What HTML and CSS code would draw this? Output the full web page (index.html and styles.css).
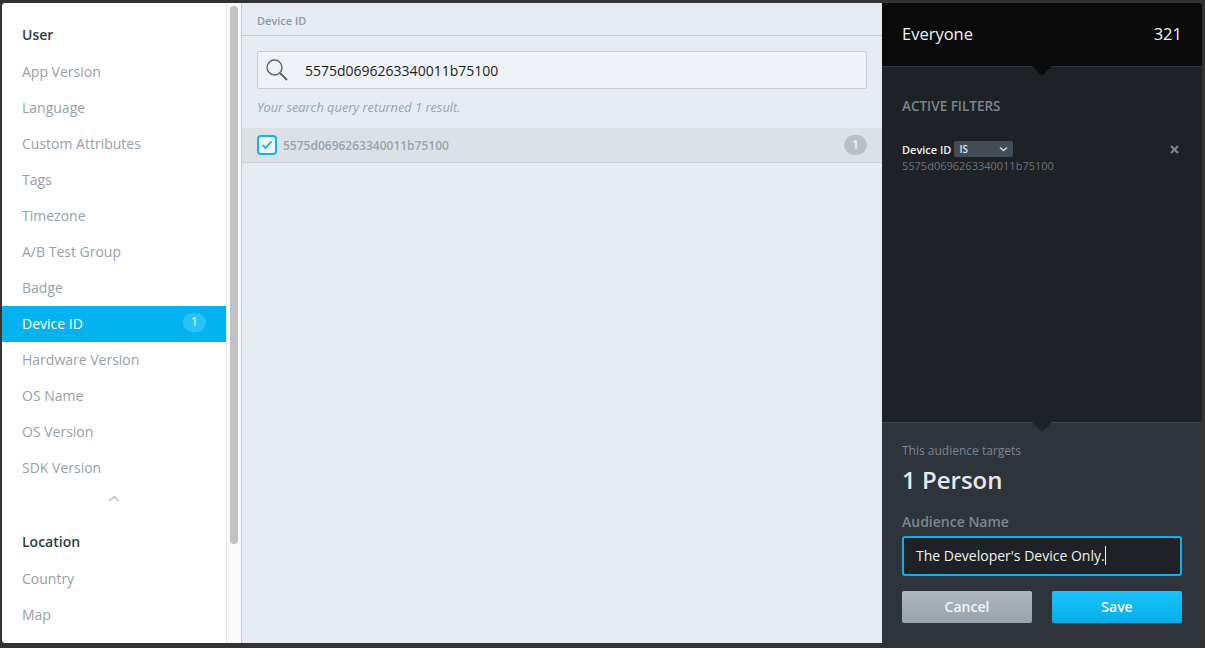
FILE: index.html
```html
<!DOCTYPE html>
<html lang="en">
<head>
<meta charset="utf-8">
<title>Audience</title>
<link rel="stylesheet" href="styles.css">
</head>
<body>
<div class="modal">
  <nav class="side">
    <div class="side-list">
      <div class="head">User</div>
      <div class="item">App Version</div>
      <div class="item">Language</div>
      <div class="item">Custom Attributes</div>
      <div class="item">Tags</div>
      <div class="item">Timezone</div>
      <div class="item">A/B Test Group</div>
      <div class="item">Badge</div>
      <div class="item active">Device ID<span class="pill">1</span></div>
      <div class="item">Hardware Version</div>
      <div class="item">OS Name</div>
      <div class="item">OS Version</div>
      <div class="item">SDK Version</div>
      <div class="collapse"><svg width="12" height="7" viewBox="0 0 12 7"><path d="M1 6 L6 2 L11 6" fill="none" stroke="#c5cbd1" stroke-width="2.2"/></svg></div>
      <div class="head">Location</div>
      <div class="item">Country</div>
      <div class="item">Map</div>
    </div>
    <div class="track"><div class="thumb"></div></div>
  </nav>
  <main class="main">
    <div class="main-head">Device ID</div>
    <div class="search">
      <svg class="search-icon" width="24" height="24" viewBox="0 0 24 24"><circle cx="9.500" cy="9.500" r="7.500" fill="none" stroke="#5b6670" stroke-width="1.400"/><path d="M15 15 L22 22" fill="none" stroke="#5b6670" stroke-width="2"/></svg>
      <span class="query">5575d0696263340011b75100</span>
    </div>
    <div class="hint">Your search query returned 1 result.</div>
    <div class="result">
      <span class="check"><svg width="12" height="10" viewBox="0 0 12 10"><path d="M1.500 5 L4.500 8 L10.500 1.500" fill="none" stroke="#0fb4f0" stroke-width="1.800"/></svg></span>
      <span class="result-id">5575d0696263340011b75100</span>
      <span class="count">1</span>
    </div>
  </main>
  <aside class="panel">
    <div class="panel-top">
      <span>Everyone</span><span>321</span>
    </div>
    <div class="filters">
      <div class="filters-title">ACTIVE FILTERS</div>
      <div class="filter">
        <div class="filter-text">
          <div class="filter-line"><span class="filter-name">Device ID</span><span class="select">IS<svg width="9" height="6" viewBox="0 0 9 6"><path d="M1 1.500 L4.500 4.500 L8 1.500" fill="none" stroke="#d5dadf" stroke-width="1.500"/></svg></span></div>
          <div class="filter-value">5575d0696263340011b75100</div>
        </div>
        <svg class="remove" width="9" height="9" viewBox="0 0 9 9"><path d="M1 1 L8 8 M8 1 L1 8" fill="none" stroke="#7c838a" stroke-width="2.200"/></svg>
      </div>
    </div>
    <div class="summary">
      <div class="targets">This audience targets</div>
      <div class="people">1 Person</div>
      <div class="name-label">Audience Name</div>
      <div class="name-input"><span>The Developer's Device Only.</span><i class="caret"></i></div>
      <div class="actions">
        <div class="btn cancel">Cancel</div>
        <div class="btn save">Save</div>
      </div>
    </div>
  </aside>
</div>
</body>
</html>
```
FILE: styles.css
```css
* { box-sizing: border-box; }
html, body { margin: 0; height: 100%; }
body {
  background: #333333;
  padding: 3px 3px 5px 2px;
  font-family: "Open Sans", "Liberation Sans", sans-serif;
  overflow: hidden;
}
.modal {
  display: flex;
  width: 1200px;
  height: 640px;
  border-radius: 3px;
  overflow: hidden;
}
.side {
  width: 240px;
  display: flex;
  background: #fff;
  border-right: 1px solid #c4cad1;
  flex: none;
}
.side-list {
  width: 224px;
  padding-top: 14px;
  flex: none;
}
.head {
  height: 37px;
  line-height: 36px;
  padding-left: 20px;
  font-size: 14px;
  font-weight: 600;
  color: #2f3b47;
}
.item {
  height: 36px;
  line-height: 36px;
  padding-left: 20px;
  font-size: 14px;
  color: #97a0a9;
  display: flex;
  align-items: center;
  justify-content: space-between;
  padding-right: 20px;
}
.item.active { background: #03b2ee; color: #fff; }
.pill {
  width: 23px;
  height: 19px;
  border-radius: 10px;
  background: #2bc2f7;
  color: #fff;
  font-size: 12px;
  line-height: 18px;
  text-align: center;
  margin-top: -3px;
}
.collapse {
  height: 38px;
  display: flex;
  justify-content: center;
  padding: 9px 0 0 0;
}
.track {
  flex: 1;
  position: relative;
  background: #fafafa;
  border-left: 1px solid #e6e6e6;
  padding: 3px 2px 0 3px;
}
.thumb {
  width: 8px;
  height: 538px;
  border-radius: 4px;
  background: #c1c1c1;
}
.main {
  width: 640px;
  flex: none;
  background: #e6ebf3;
}
.main-head {
  height: 33px;
  line-height: 35px;
  padding-left: 15px;
  border-bottom: 1px solid #c4cad1;
  font-size: 11px;
  font-weight: 600;
  color: #8f98a1;
}
.search {
  margin: 15px 15px 0 15px;
  height: 38px;
  background: #eff3f7;
  border: 1px solid #c7ccd2;
  border-radius: 2px;
  display: flex;
  align-items: center;
  padding-left: 7px;
}
.search-icon { flex: none; }
.query {
  margin-left: 16px;
  font-size: 14px;
  color: #1c1f22;
}
.hint {
  height: 39px;
  padding: 9px 0 0 15px;
  line-height: 18px;
  font-size: 12.800px;
  font-style: italic;
  color: #9aa2aa;
}
.result {
  height: 35px;
  background: #dce1e8;
  border-bottom: 1px solid #ccd2d8;
  display: flex;
  align-items: center;
  padding: 0 15px;
}
.check {
  width: 20px;
  height: 20px;
  border: 2.500px solid #0fb4f0;
  border-radius: 4px;
  background: #f2f6fa;
  display: flex;
  align-items: center;
  justify-content: center;
  flex: none;
}
.result-id {
  margin-left: 6px;
  font-size: 12px;
  font-weight: 600;
  color: #9aa2aa;
  flex: 1;
}
.count {
  width: 23px;
  height: 20px;
  border-radius: 10px;
  background: #b9bfc6;
  color: #eef1f4;
  font-size: 12px;
  font-weight: 600;
  line-height: 20px;
  text-align: center;
}
.panel {
  width: 320px;
  flex: none;
  display: flex;
  flex-direction: column;
  background: #1e2226;
}
.panel-top {
  height: 64px;
  background: #0b0b0b;
  border-bottom: 1px solid #2f363d;
  display: flex;
  justify-content: space-between;
  align-items: center;
  padding: 0 20px 3px 20px;
  color: #f2f4f6;
  font-size: 16.500px;
  position: relative;
}
.panel-top::after {
  content: "";
  position: absolute;
  left: 150px;
  bottom: -10px;
  border-left: 10px solid transparent;
  border-right: 10px solid transparent;
  border-top: 10px solid #0b0b0b;
}
.filters {
  flex: 1;
  padding: 27px 23px 0 20px;
}
.filters-title {
  font-size: 13.500px;
  font-weight: 600;
  line-height: 24px;
  color: #7e868e;
}
.filter {
  margin-top: 23px;
  display: flex;
  justify-content: space-between;
}
.filter-line {
  display: flex;
  align-items: center;
  height: 16px;
}
.filter-name {
  font-size: 11px;
  font-weight: 600;
  color: #f2f4f6;
}
.select {
  margin-left: 3px;
  width: 59px;
  height: 16px;
  background: #434d56;
  border-radius: 2px;
  padding: 0 5px;
  display: flex;
  align-items: center;
  justify-content: space-between;
  font-size: 10px;
  font-weight: 600;
  color: #e4e8ec;
}
.filter-value {
  margin-top: 1px;
  font-size: 11px;
  line-height: 16px;
  color: #6d757d;
}
.remove { margin-top: 4px; }
.summary {
  height: 221px;
  flex: none;
  background: #2e343b;
  border-top: 1px solid #3f474f;
  padding: 20px 20px 0 20px;
  position: relative;
}
.summary::before {
  content: "";
  position: absolute;
  left: 150px;
  top: -1px;
  border-left: 10px solid transparent;
  border-right: 10px solid transparent;
  border-top: 10px solid #1e2226;
}
.targets {
  font-size: 12px;
  line-height: 16px;
  color: #7e868e;
}
.people {
  margin-top: 4px;
  font-size: 24px;
  font-weight: 600;
  line-height: 34px;
  color: #e6e9ec;
}
.name-label {
  margin-top: 15px;
  font-size: 14px;
  font-weight: 600;
  line-height: 20px;
  color: #7e868e;
}
.name-input {
  margin-top: 4px;
  height: 40px;
  background: #1e2226;
  border: 2px solid #0bb0ee;
  border-radius: 3px;
  display: flex;
  align-items: center;
  padding: 0 0 2px 12px;
  font-size: 14px;
  color: #eef1f4;
}
.caret {
  width: 1px;
  height: 19px;
  background: #eef1f4;
}
.actions {
  margin-top: 15px;
  display: flex;
  gap: 20px;
}
.btn {
  width: 130px;
  height: 32px;
  border-radius: 2px;
  line-height: 32px;
  text-align: center;
  font-size: 14px;
  font-weight: 600;
  color: #f0f3f6;
}
.cancel { background: linear-gradient(#aeb6bd, #99a2aa); }
.save { background: linear-gradient(#1cc3fb, #03aeea); color: #fff; }
```
